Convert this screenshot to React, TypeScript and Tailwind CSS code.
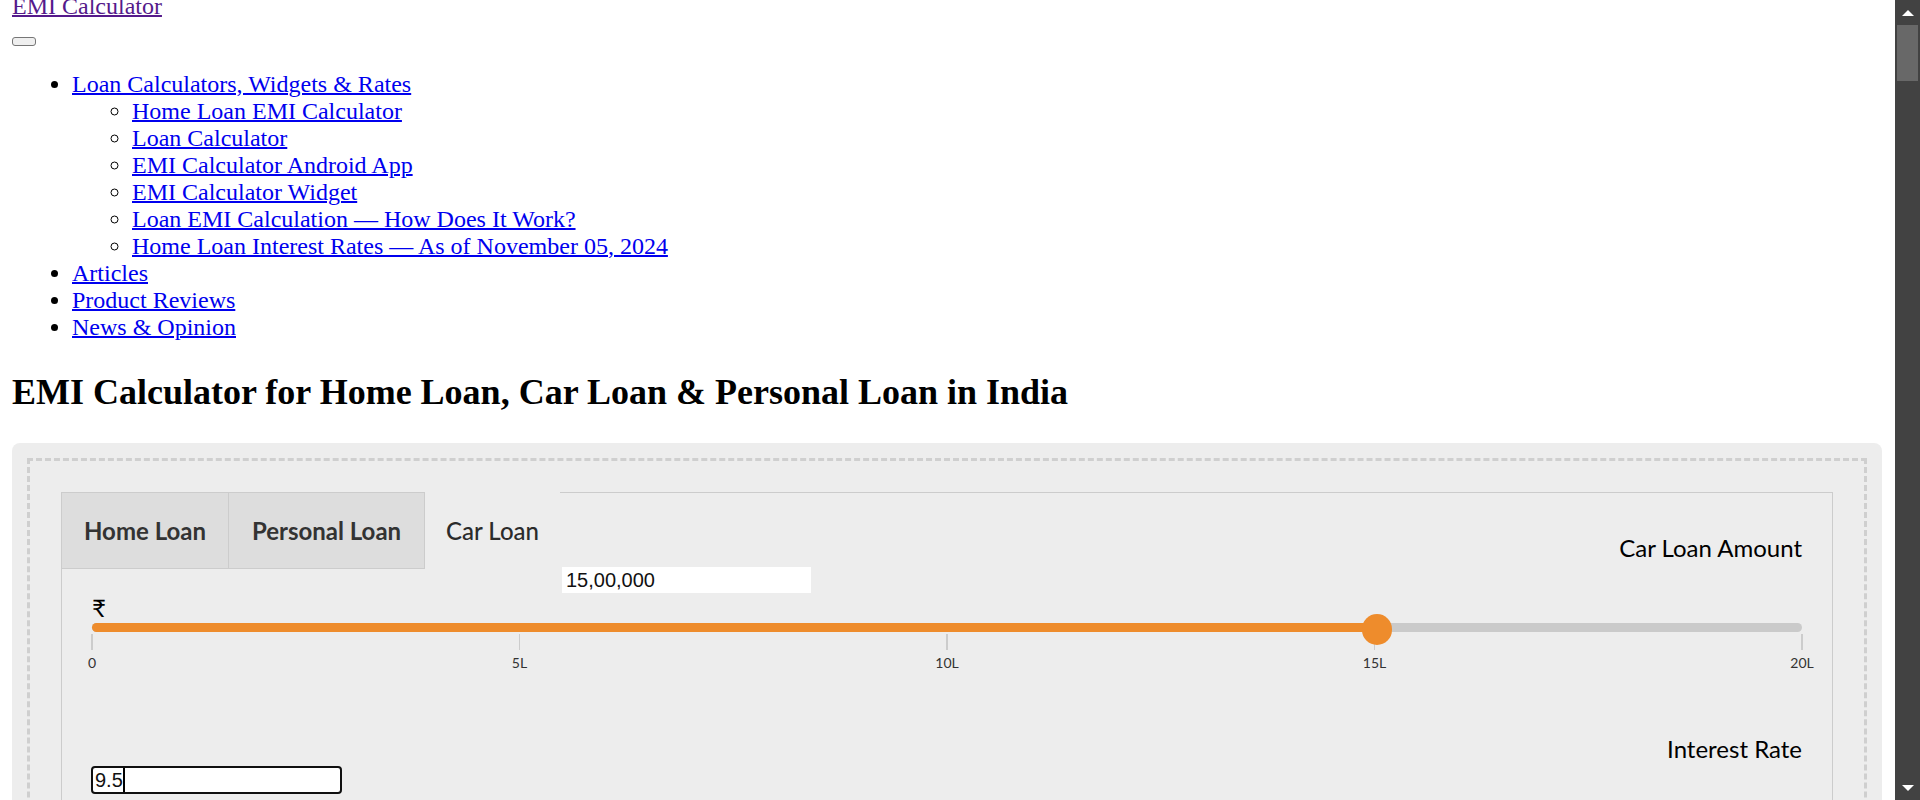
import React from "react";

const subItems = [
  "Home Loan EMI Calculator",
  "Loan Calculator",
  "EMI Calculator Android App",
  "EMI Calculator Widget",
  "Loan EMI Calculation — How Does It Work?",
  "Home Loan Interest Rates — As of November 05, 2024",
];

function Link({ children }: { children: React.ReactNode }) {
  return (
    <a href="#" className="text-[#0000ee] underline decoration-[2px]">
      {children}
    </a>
  );
}

function Ticks({ labels }: { labels: string[] }) {
  return (
    <div className="flex justify-between">
      {labels.map((l) => (
        <div key={l} className="flex w-0 flex-col items-center">
          <div className="mt-[2px] h-[16px] w-[1.5px] shrink-0 bg-[#cccccc]" />
          <div className="mt-[4px] whitespace-nowrap text-[14px] leading-[17px] text-[#333333]">{l}</div>
        </div>
      ))}
    </div>
  );
}

function Scrollbar() {
  return (
    <div className="flex h-full w-[25px] shrink-0 flex-col bg-[#424242]">
      <div className="flex h-[25px] shrink-0 items-center justify-center">
        <svg width="12" height="6" viewBox="0 0 12 6">
          <polygon points="0,6 12,6 6,0" fill="#ffffff" />
        </svg>
      </div>
      <div className="flex-1 px-[2px]">
        <div className="h-[56px] bg-[#686868]" />
      </div>
      <div className="flex h-[25px] shrink-0 items-center justify-center">
        <svg width="12" height="6" viewBox="0 0 12 6">
          <polygon points="0,0 12,0 6,6" fill="#ffffff" />
        </svg>
      </div>
    </div>
  );
}

export default function App() {
  return (
    <div className="flex h-screen overflow-hidden bg-white">
      <div className="min-w-0 flex-1 overflow-hidden">
        <div className="pt-px">
          <div className="-mt-[8px] pl-[12px] pr-[13px] font-['Liberation_Serif',serif] text-black">
            <div className="text-[24px] leading-[27px]">
              <a href="#" className="text-[#551a8b] underline decoration-[2px]">
                EMI Calculator
              </a>
            </div>
            <div className="h-[27px] pt-[17px]">
              <button className="block h-[9px] w-[24px] rounded-[3px] border border-[#767676] bg-[#efefef]" />
            </div>
            <ul className="mt-[24px] list-disc pl-[60px] text-[24px] leading-[27px]">
              <li>
                <Link>Loan Calculators, Widgets &amp; Rates</Link>
                <ul className="list-[circle] pl-[60px]">
                  {subItems.map((s) => (
                    <li key={s}>
                      <Link>{s}</Link>
                    </li>
                  ))}
                </ul>
              </li>
              <li>
                <Link>Articles</Link>
              </li>
              <li>
                <Link>Product Reviews</Link>
              </li>
              <li>
                <Link>News &amp; Opinion</Link>
              </li>
            </ul>
            <h2 className="mt-[30px] mb-[30px] text-[36px] font-bold leading-[42px]">
              EMI Calculator for Home Loan, Car Loan &amp; Personal Loan in India
            </h2>

            <div className="rounded-[8px] bg-[#ededed] p-[15px]">
              <div className="border-[3px] border-dashed border-[#cfcfcf] px-[31px] pt-[31px] pb-[40px]">
                <div className="border-x border-b border-[#cccccc] font-['Lato',sans-serif]">
                  <div className="flex items-start">
                    <div className="flex text-[24px] leading-[29px]">
                      <div className="w-[167px] border-y border-r border-[#cccccc] bg-[#dddddd] py-[23px] text-center font-bold text-[#333333]">
                        Home Loan
                      </div>
                      <div className="w-[196px] border-y border-r border-[#cccccc] bg-[#dddddd] py-[23px] text-center font-bold text-[#333333]">
                        Personal Loan
                      </div>
                      <div className="w-[135px] bg-[#ededed] py-[24px] text-center font-medium text-[#2b2b2b]">
                        Car Loan
                      </div>
                    </div>
                    <div className="flex-1 border-t border-[#cccccc]">
                      <div className="pt-[40px] pr-[30px] text-right text-[24px] leading-[29px] text-black">
                        Car Loan Amount
                      </div>
                      <input
                        readOnly
                        value="15,00,000"
                        className="mt-[5px] ml-[2px] block h-[26px] w-[249px] bg-white pl-[4px] font-['Liberation_Sans',Arial,sans-serif] text-[20px] text-[#111111] outline-none"
                      />
                    </div>
                  </div>

                  <div className="px-[30px]">
                    <div className="text-[24px] leading-[30px] text-black">₹</div>
                    <div className="relative h-[9px] rounded-full bg-[#cacaca]">
                      <div className="h-full w-3/4 rounded-l-full bg-[#ee8c2c]" />
                      <div className="absolute top-[-9px] left-[calc(75%-13px)] h-[31px] w-[30px] rounded-full bg-[#ee8c2c]" />
                    </div>
                    <Ticks labels={["0", "5L", "10L", "15L", "20L"]} />
                  </div>

                  <div className="px-[30px] pt-[63px]">
                    <div className="text-right text-[24px] leading-[29px] text-black">Interest Rate</div>
                    <div className="relative mt-[4px] h-[26px] w-[249px]">
                      <input
                        readOnly
                        value="9.5"
                        className="block h-[26px] w-[249px] rounded-[3px] bg-white pl-[3px] font-['Liberation_Sans',Arial,sans-serif] text-[20px] text-[#111111] outline-2 outline-offset-[-1px] outline-[#101010]"
                      />
                      <span className="absolute top-[1px] left-[31px] h-[24px] w-[2px] bg-black" />
                    </div>
                    <div className="mt-[6px] text-[24px] leading-[30px] text-black">%</div>
                    <div className="relative h-[9px] rounded-full bg-[#cacaca]">
                      <div className="h-full w-[30%] rounded-l-full bg-[#ee8c2c]" />
                      <div className="absolute top-[-9px] left-[calc(30%-13px)] h-[31px] w-[30px] rounded-full bg-[#ee8c2c]" />
                    </div>
                    <Ticks labels={["5", "7.5", "10", "12.5", "15", "17.5", "20"]} />
                  </div>

                  <div className="px-[30px] pt-[63px] pb-[40px]">
                    <div className="text-right text-[24px] leading-[29px] text-black">Loan Tenure</div>
                    <input
                      readOnly
                      value="5"
                      className="mt-[4px] block h-[26px] w-[249px] bg-white pl-[3px] font-['Liberation_Sans',Arial,sans-serif] text-[20px] text-[#111111] outline-none"
                    />
                    <div className="mt-[6px] text-[24px] leading-[30px] text-black">Yr</div>
                    <div className="relative h-[9px] rounded-full bg-[#cacaca]">
                      <div className="h-full w-1/2 rounded-l-full bg-[#ee8c2c]" />
                      <div className="absolute top-[-9px] left-[calc(50%-13px)] h-[31px] w-[30px] rounded-full bg-[#ee8c2c]" />
                    </div>
                    <Ticks labels={["0", "1", "2", "3", "4", "5", "6", "7", "8", "9", "10"]} />
                  </div>
                </div>
              </div>
            </div>
          </div>
        </div>
      </div>
      <Scrollbar />
    </div>
  );
}
